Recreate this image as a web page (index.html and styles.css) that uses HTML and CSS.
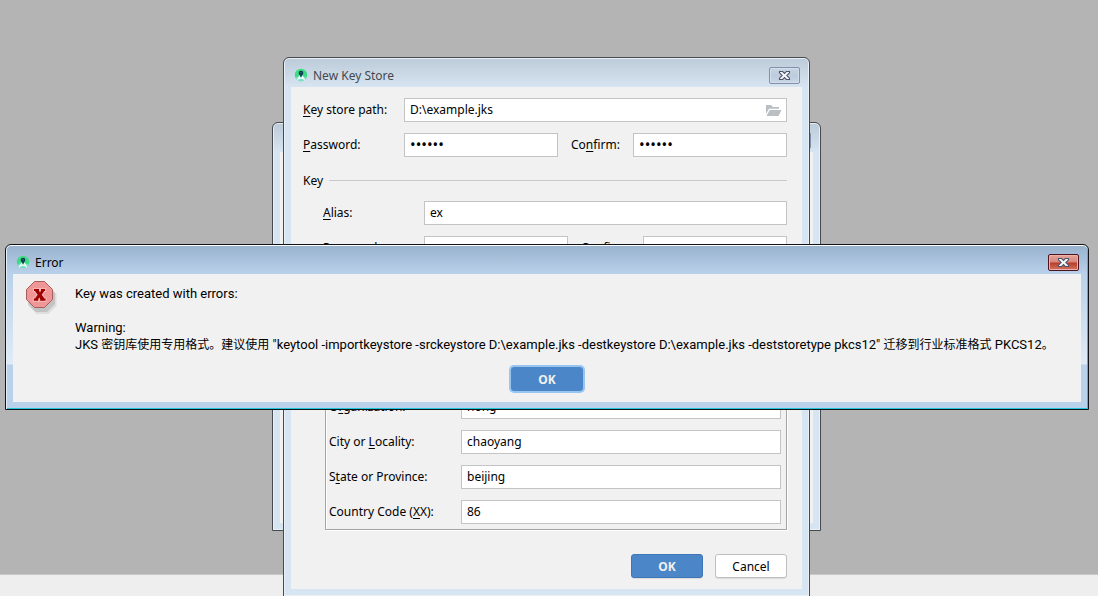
FILE: index.html
```html
<!DOCTYPE html>
<html lang="en">
<head>
<meta charset="utf-8">
<title>New Key Store</title>
<link rel="stylesheet" href="styles.css">
</head>
<body>
<svg class="symbols" aria-hidden="true">
  <symbol id="app" viewBox="0 0 14 14">
    <circle cx="7" cy="7" r="6.200" fill="#3ddc84"/>
    <path d="M1.400 9.400Q7 7 12.600 9.400Q11 13.200 7 13.200Q3 13.200 1.400 9.400Z" fill="#7fdfc4"/>
    <path d="M6 7.800L3.200 12.400M8 7.800L10.800 12.400M4.500 10.800Q7 9.600 9.500 10.800" stroke="#f2fdfa" stroke-width="1.200" fill="none"/>
    <circle cx="7" cy="5" r="2.300" fill="#0c3550"/>
    <path d="M5.900 6.500h2.200v1.500L7 9l-1.100-1z" fill="#17485c"/>
    <circle cx="7" cy="4.800" r=".7" fill="#2b8c83"/>
  </symbol>
  <symbol id="close" viewBox="0 0 13 11">
    <path d="M1.500 1.500h3.200l1.800 1.900 1.800-1.900h3.200v1.300L8.800 5.500l2.700 2.700v1.300H8.300L6.500 7.600 4.700 9.500H1.500V8.200l2.700-2.700-2.700-2.700z" fill="#f6f8fa" stroke="#4f5568" stroke-width="1.100"/>
  </symbol>
</svg>
<main class="desktop">
  <div class="workspace"></div>
  <div class="statusbar"></div>

  <section class="window window-back" aria-label="Generate Signed Bundle">
    <header class="titlebar">
      <button class="close" type="button" aria-label="Close"><svg width="13" height="11"><use href="#close"/></svg></button>
    </header>
    <div class="pane"></div>
  </section>

  <section class="window window-store" aria-labelledby="store-title">
    <header class="titlebar">
      <svg class="app-icon" width="14" height="14" viewBox="0 0 14 14"><use href="#app" width="14" height="14"/></svg>
      <h2 class="title" id="store-title">New Key Store</h2>
      <button class="close" type="button" aria-label="Close"><svg width="13" height="11"><use href="#close"/></svg></button>
    </header>
    <form class="pane store-form">
      <div class="row">
        <label for="path"><u>K</u>ey store path:</label>
        <div class="path-field">
          <input class="field" id="path" type="text" value="D:\example.jks">
          <button class="browse" type="button" aria-label="Browse">
            <svg width="16" height="12" viewBox="0 0 16 12"><path d="M0 0h5l2 2h6v1.800H3L0 9z" fill="#b9bfc2"/><path d="M3.700 5H15.500l-3 6H.5z" fill="#b9bfc2"/></svg>
          </button>
        </div>
      </div>
      <div class="row row-pair">
        <label for="pw"><u>P</u>assword:</label>
        <input class="field" id="pw" type="password" value="secret">
        <label class="confirm" for="pw2">Co<u>n</u>firm:</label>
        <input class="field" id="pw2" type="password" value="secret">
      </div>
      <h3 class="group">Key</h3>
      <div class="row indent">
        <label for="alias"><u>A</u>lias:</label>
        <input class="field" id="alias" type="text" value="ex">
      </div>
      <div class="row row-pair indent">
        <label for="kpw">Pass<u>w</u>ord:</label>
        <input class="field" id="kpw" type="password" value="secret">
        <label class="confirm" for="kpw2">Confir<u>m</u>:</label>
        <input class="field" id="kpw2" type="password" value="secret">
      </div>
      <div class="certificate">
        <div class="row">
          <label for="org">O<u>r</u>ganization:</label>
          <input class="field" id="org" type="text" value="hong">
        </div>
        <div class="row">
          <label for="city">City or <u>L</u>ocality:</label>
          <input class="field" id="city" type="text" value="chaoyang">
        </div>
        <div class="row">
          <label for="state">S<u>t</u>ate or Province:</label>
          <input class="field" id="state" type="text" value="beijing">
        </div>
        <div class="row">
          <label for="country">Country Code (<u>X</u>X):</label>
          <input class="field" id="country" type="text" value="86">
        </div>
      </div>
      <div class="actions">
        <button class="btn btn-primary" type="button">OK</button>
        <button class="btn" type="button">Cancel</button>
      </div>
    </form>
  </section>

  <section class="window window-error" role="alertdialog" aria-labelledby="error-title">
    <header class="titlebar">
      <svg class="app-icon" width="14" height="14" viewBox="0 0 14 14"><use href="#app" width="14" height="14"/></svg>
      <h2 class="title" id="error-title">Error</h2>
      <button class="close close-active" type="button" aria-label="Close"><svg width="13" height="11"><use href="#close"/></svg></button>
    </header>
    <div class="pane error-pane">
      <div class="message">
        <svg class="error-icon" width="32" height="34" viewBox="0 0 32 34">
          <path d="M10.500 5h12l8 8v12l-8 8h-12l-8-8V13z" fill="#000" opacity=".08"/>
          <path d="M10 4h11l8 8v11l-8 8H10l-8-8V12z" fill="#000" opacity=".12"/>
          <path d="M8.500 .5h10l8 8v10l-8 8h-10l-8-8v-10z" fill="#ef9696" stroke="#a85d5d"/>
          <path d="M8 8H13V9.800L14 11.500 15 9.800V8H19V10H18.200L15.700 13.700 18.400 17.600H19.500V19.800H14.200V18L13.400 16.500 12.200 18V19.800H7.900V17.600H9L11.700 13.800 9 10H8Z" fill="#9d0000" stroke="#f6b4b4" stroke-width="2.200" paint-order="stroke"/>
        </svg>
        <div class="message-text">
          <p>Key was created with errors:</p>
          <p class="warning">Warning:<br>JKS <span lang="zh-CN">密钥库使用专用格式。建议使用</span> "keytool -importkeystore -srckeystore D:\example.jks -destkeystore D:\example.jks -deststoretype pkcs12" <span lang="zh-CN">迁移到行业标准格式</span> PKCS12<span lang="zh-CN">。</span></p>
        </div>
      </div>
      <button class="btn btn-primary btn-focus" type="button">OK</button>
    </div>
  </section>
</main>
</body>
</html>
```
FILE: styles.css
```css
* { box-sizing: border-box; }

body {
  margin: 0;
  overflow: hidden;
  color: #000;
  font: 12px/17px "Noto Sans", "Noto Sans CJK SC", sans-serif;
}

button, input { font: inherit; color: inherit; }
h2, h3, p { margin: 0; font-size: inherit; font-weight: 400; }
u { text-underline-offset: 2px; text-decoration-skip-ink: none; }
:lang(zh-CN) { font-size: 12px; line-height: 1; }
.symbols { position: absolute; width: 0; height: 0; }

.desktop {
  position: relative;
  display: flex;
  flex-direction: column;
  height: 100vh;
  overflow: hidden;
}
.workspace { flex: 1; background: #b4b4b4; }
.statusbar { height: 22px; background: #eee; border-top: 1px solid #c8c8c8; }

/* Window frame */
.window {
  position: absolute;
  display: flex;
  flex-direction: column;
  padding: 0 7px 7px;
  border: 1px solid #46494d;
  border-radius: 6px 6px 0 0;
  background: linear-gradient(#bccbd9, #d7e4f2 29px);
  box-shadow: inset 0 0 0 1px #e9f0f7;
}
.titlebar {
  display: flex;
  align-items: center;
  height: 29px;
  padding: 5px 2px 0 3px;
}
.app-icon { margin-right: 5px; }
.title { color: #45494d; }
.close {
  display: flex;
  align-items: center;
  justify-content: center;
  width: 31px;
  height: 17px;
  margin-left: auto;
  padding: 0;
  border: 1px solid #848fa8;
  border-radius: 2px;
  background: linear-gradient(#c7d5e3, #bdccdd 50%, #c9d8e8);
  box-shadow: inset 0 0 0 1px #d3dfec;
}
.pane { flex: 1; background: #f1f1f1; }

.window-back { top: 122px; left: calc(50% - 277px); width: 549px; height: 409px; }
.window-store { top: 57px; left: calc(50% - 266px); width: 527px; }
.window-error {
  top: 244px;
  left: 5px;
  right: 9px;
  border-color: #101418;
  background: linear-gradient(#98b1cd, #b9d1ea 29px, #e0ebf7 119px, #b9d1ea 120px);
  box-shadow: inset 0 1px #fff, inset 1px 0 #e4eff9, inset -1px -1px #25c5d9;
}
.window-error .title { color: #000; }
.close-active {
  border-color: #4d1420;
  background: linear-gradient(#e5a29a, #d6877c 48%, #b83a28 52%, #d47560);
  box-shadow: inset 0 0 0 1px #eab2aa;
}

/* Key store form */
.store-form {
  display: flex;
  flex-direction: column;
  gap: 11px;
  padding: 11px 15px 11px 12px;
}
.row { display: grid; grid-template-columns: 101px 1fr; align-items: center; }
.row-pair { grid-template-columns: 101px 1fr 75px 1fr; }
.indent { margin-left: 20px; }
.confirm { padding-left: 13px; }
.row label { padding-bottom: 2px; }
.field {
  width: 100%;
  min-width: 0;
  height: 24px;
  padding: 0 5px 2px;
  border: 1px solid #c4c4c4;
  border-radius: 0;
  background: #fff;
  outline: none;
}
.field[type="password"] {
  padding: 0 5px 3px;
  font-size: 15px;
}
.path-field { position: relative; }
.browse {
  position: absolute;
  top: 7px;
  right: 5px;
  display: flex;
  padding: 0;
  border: 0;
  background: none;
}
.group { display: flex; align-items: center; gap: 6px; height: 22px; padding-top: 2px; }
.group::after { content: ""; flex: 1; border-top: 1px solid #c9c9c9; }
.certificate {
  display: flex;
  flex-direction: column;
  gap: 11px;
  margin: 89px 0 0 22px;
  padding: 34px 5px 5px 3px;
  border: 1px solid #a5a5a5;
  box-shadow: 1px 1px #fff, inset 1px 1px #fff;
}
.certificate .row { grid-template-columns: 132px 1fr; }
.actions { display: flex; justify-content: flex-end; gap: 12px; margin-top: 13px; }

.btn {
  width: 72px;
  height: 24px;
  padding: 0;
  border: 1px solid #bfbfbf;
  border-radius: 3px;
  background: #fff;
  box-shadow: 0 1px #dcdcdc;
}
.btn-primary {
  border-color: #3f76b8;
  background: #4a86c8;
  color: #f1f1f1;
  font-weight: 700;
}
.btn-focus { border-color: #4a86c8; box-shadow: 0 0 0 2px #98c4f2; }

/* Error message */
.error-pane {
  display: flex;
  flex-direction: column;
  align-items: center;
  gap: 14px;
  padding: 7px 13px 11px;
}
.message { display: flex; align-self: stretch; gap: 17px; }
.error-icon { flex: none; }
.message-text { padding-top: 4px; font-family: Roboto, "Noto Sans CJK SC", sans-serif; font-size: 13px; }
.warning { margin-top: 17px; }
```
